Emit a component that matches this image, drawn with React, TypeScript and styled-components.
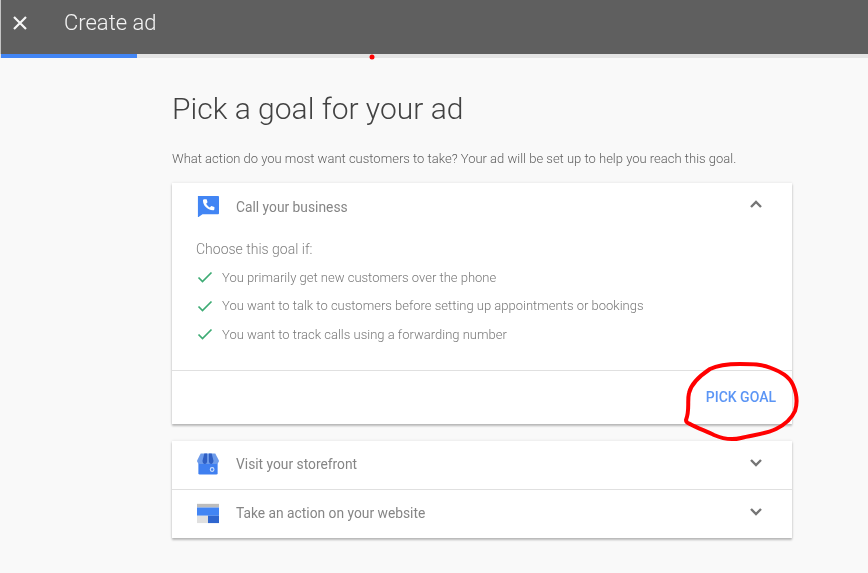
import React from "react";
import styled, { createGlobalStyle } from "styled-components";

const GlobalStyle = createGlobalStyle`
  html, body {
    margin: 0;
    padding: 0;
    background: #f9f9f9;
    font-family: Roboto, "Liberation Sans", sans-serif;
  }
`;

const Page = styled.div`
  position: relative;
  width: 868px;
  height: 573px;
  overflow: hidden;
  background: #f9f9f9;
  filter: blur(0.4px);
`;

const TopBar = styled.header`
  height: 54px;
  display: flex;
  align-items: center;
  background: #5f5f5f;
  border-left: 1px solid #c4c4c4;
  box-sizing: border-box;
  padding: 0 0 9px 10px;
  color: #f4f4f4;
`;

const CloseButton = styled.div`
  width: 18px;
  height: 18px;
  margin-right: 35px;
  display: flex;
`;

const BarTitle = styled.div`
  font-size: 22px;
  font-weight: 300;
`;

const Progress = styled.div`
  height: 4px;
  background: #e4e4e4;
  padding-left: 1px;
`;

const ProgressFill = styled.div`
  width: 136px;
  height: 100%;
  background: #4285f4;
`;

const Main = styled.main`
  width: 620px;
  margin-left: 172px;
`;

const Heading = styled.h1`
  margin: 33px 0 0;
  font-size: 30px;
  line-height: 36px;
  font-weight: 300;
  color: #424242;
`;

const Intro = styled.p`
  margin: 23px 0 0;
  font-size: 13px;
  line-height: 18px;
  font-weight: 300;
  color: #5f5f5f;
  white-space: nowrap;
`;

const Card = styled.section<{ $gap: number }>`
  margin-top: ${(p) => p.$gap}px;
  background: #fff;
  box-shadow: 0 2px 2px rgba(0, 0, 0, 0.24), 0 0 3px rgba(0, 0, 0, 0.1);
`;

const RowHeader = styled.div<{ $divided?: boolean; $height: number }>`
  height: ${(p) => p.$height}px;
  display: flex;
  align-items: center;
  padding: 0 25px;
  box-sizing: border-box;
  border-top: ${(p) => (p.$divided ? "1px solid #e0e0e0" : "none")};
`;

const RowIcon = styled.div`
  width: 22px;
  height: 22px;
  margin-right: 17px;
  margin-bottom: 2px;
  display: flex;
`;

const RowLabel = styled.div`
  flex: 1;
  font-size: 13.8px;
  font-weight: 400;
  color: #858585;
  margin-bottom: 1px;
`;

const Chevron = styled.div`
  width: 24px;
  height: 24px;
  margin-right: -1px;
  margin-bottom: 6px;
  display: flex;
`;

const Body = styled.div`
  padding: 8px 24px 21px;
`;

const BodyTitle = styled.div`
  font-size: 14px;
  line-height: 20px;
  font-weight: 300;
  color: #808080;
  margin-bottom: 4px;
`;

const Reason = styled.div`
  display: flex;
  align-items: center;
  height: 28.5px;
  font-size: 13px;
  font-weight: 300;
  color: #787878;
`;

const Tick = styled.div`
  width: 18px;
  height: 18px;
  margin-right: 8px;
  display: flex;
`;

const Actions = styled.div`
  height: 53px;
  border-top: 1px solid #e0e0e0;
  display: flex;
  align-items: center;
  justify-content: flex-end;
  padding-right: 16px;
`;

const PickGoal = styled.button`
  border: 0;
  padding: 0;
  background: none;
  font-family: inherit;
  font-size: 14px;
  font-weight: 500;
  color: #5b95f5;
`;

const Scribble = styled.svg`
  position: absolute;
  inset: 0;
  pointer-events: none;
`;

const PhoneIcon = () => (
  <svg width="22" height="22" viewBox="0 0 24 24">
    <path d="M1 1h22a1 1 0 0 1 1 1v18a1 1 0 0 1-1 1H6l-5 3.500V1z" fill="#4285f4" />
    <path
      d="M8 4.500l2.500 0 1 3.500-1.500 1.500c.8 1.700 2.200 3.100 4 4l1.500-1.500 3.500 1v2.300c0 .9-.7 1.400-1.500 1.400C11 16.200 6.500 11.500 6.500 6c0-.9.6-1.500 1.500-1.500z"
      fill="#fff"
    />
  </svg>
);

const StoreIcon = () => (
  <svg width="22" height="22" viewBox="0 0 24 24">
    <rect x="1.500" y="9" width="21" height="14.500" rx="1.500" fill="#3f7ff0" />
    <path d="M4 0.500h16l4 8c0 2-2 3.500-3.500 3.500H3.500C2 12 0 10.500 0 8.500z" fill="#6d9bea" />
    <path d="M8 0.500h3v8.500c0 1.500-1 3-2.500 3S6 10.500 6 8.500zM13 0.500h3L18 8.500c0 2-1.500 3.500-2.500 3.500S13 10.500 13 9z" fill="#2f5fc4" />
    <circle cx="16.500" cy="18" r="2" fill="none" stroke="#cfe0fb" strokeWidth="1.200" />
  </svg>
);

const WebIcon = () => (
  <svg width="22" height="22" viewBox="0 0 24 24">
    <rect x="0" y="2" width="24" height="4" fill="#bdbdbd" />
    <rect x="0" y="6" width="24" height="9" fill="#4285f4" />
    <rect x="0" y="15" width="12" height="8" fill="#e0e0e0" />
    <rect x="12" y="15" width="12" height="8" fill="#2f66cf" />
  </svg>
);

const ChevronIcon = ({ up }: { up?: boolean }) => (
  <svg width="24" height="24" viewBox="0 0 24 24">
    <path
      d={up ? "M7 15l5-5 5 5" : "M7 10l5 5 5-5"}
      fill="none"
      stroke="#757575"
      strokeWidth="2.400"
    />
  </svg>
);

const reasons = [
  "You primarily get new customers over the phone",
  "You want to talk to customers before setting up appointments or bookings",
  "You want to track calls using a forwarding number",
];

function App() {
  return (
    <Page>
      <GlobalStyle />
      <TopBar>
        <CloseButton>
          <svg width="18" height="18" viewBox="0 0 18 18">
            <path d="M3 3l12 12M15 3L3 15" stroke="#f6f6f6" strokeWidth="2.200" />
          </svg>
        </CloseButton>
        <BarTitle>Create ad</BarTitle>
      </TopBar>
      <Progress>
        <ProgressFill />
      </Progress>
      <Main>
        <Heading>Pick a goal for your ad</Heading>
        <Intro>What action do you most want customers to take? Your ad will be set up to help you reach this goal.</Intro>
        <Card $gap={15}>
          <RowHeader $height={48}>
            <RowIcon>
              <PhoneIcon />
            </RowIcon>
            <RowLabel>Call your business</RowLabel>
            <Chevron>
              <ChevronIcon up />
            </Chevron>
          </RowHeader>
          <Body>
            <BodyTitle>Choose this goal if:</BodyTitle>
            {reasons.map((reason) => (
              <Reason key={reason}>
                <Tick>
                  <svg width="18" height="18" viewBox="0 0 18 18">
                    <path d="M2.500 9.500l4 4 9-9" fill="none" stroke="#3dab74" strokeWidth="1.700" />
                  </svg>
                </Tick>
                {reason}
              </Reason>
            ))}
          </Body>
          <Actions>
            <PickGoal>PICK GOAL</PickGoal>
          </Actions>
        </Card>
        <Card $gap={17}>
          <RowHeader $height={48}>
            <RowIcon>
              <StoreIcon />
            </RowIcon>
            <RowLabel>Visit your storefront</RowLabel>
            <Chevron>
              <ChevronIcon />
            </Chevron>
          </RowHeader>
          <RowHeader $divided $height={49}>
            <RowIcon>
              <WebIcon />
            </RowIcon>
            <RowLabel>Take an action on your website</RowLabel>
            <Chevron>
              <ChevronIcon />
            </Chevron>
          </RowHeader>
        </Card>
      </Main>
      <Scribble width="868" height="573" viewBox="0 0 868 573">
        <circle cx="372" cy="57" r="2.500" fill="#f00" />
        <path
          d="M686 420C690 410 687 401 689 393C691 384 701 375 710 369C718 365 727 364 740 364C752 364 762 364 771 368C781 372 789 376 793 385C796 392 798 402 795 411C791 420 784 425 776 429C766 434 753 435 741 438C733 440 723 439 714 435C706 431 697 428 690 424C687 423 686 422 686 420Z"
          fill="none"
          stroke="#f00"
          strokeWidth="4"
          strokeLinejoin="round"
        />
      </Scribble>
    </Page>
  );
}

export default App;
